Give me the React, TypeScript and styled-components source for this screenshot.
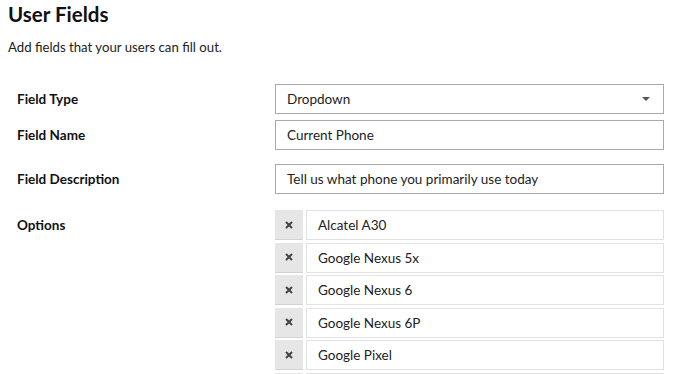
import React from "react";
import styled, { createGlobalStyle } from "styled-components";

const Global = createGlobalStyle`
  html, body { margin: 0; padding: 0; background: #fff; }
  body { font-family: Lato, "Open Sans", sans-serif; color: #222; }
  * { box-sizing: border-box; }
`;

const Page = styled.div`
  width: 690px;
  height: 374px;
  overflow: hidden;
  padding: 1px 8px 0 8px;
`;

const Title = styled.h1`
  margin: 0;
  font-size: 20.5px;
  font-weight: 700;
  line-height: 26px;
  color: #111;
`;

const Subtitle = styled.p`
  margin: 11px 0 0 0;
  font-size: 13.2px;
  line-height: 18px;
  color: #222;
`;

const Form = styled.div`
  display: grid;
  grid-template-columns: 258px 389px;
  padding-left: 9px;
  margin-top: 28px;
`;

const Label = styled.div<{ $mt: number }>`
  margin-top: ${(p) => p.$mt}px;
  height: 29px;
  display: flex;
  align-items: center;
  font-size: 13.5px;
  font-weight: 700;
  color: #111;
`;

const Control = styled.div<{ $mt: number }>`
  margin-top: ${(p) => p.$mt}px;
`;

const Box = styled.div`
  height: 29.5px;
  border: 1px solid #a9a9a9;
  display: flex;
  align-items: center;
  padding: 0 11px;
  font-size: 13.5px;
  color: #222;
  background: #fff;
`;

const SelectBox = styled(Box)`
  justify-content: space-between;
`;

const Caret = styled.span`
  width: 0;
  height: 0;
  border-left: 4px solid transparent;
  border-right: 4px solid transparent;
  border-top: 4px solid #555;
  margin-right: 2px;
`;

const OptionList = styled.div`
  display: flex;
  flex-direction: column;
  gap: 2.6px;
`;

const OptionRow = styled.div`
  display: flex;
  gap: 3px;
  height: 30px;
`;

const RemoveBtn = styled.div`
  width: 28px;
  flex: none;
  background: #e6e6e6;
  border-bottom: 1px solid #d2d2d2;
  display: flex;
  align-items: center;
  justify-content: center;
`;

const OptionInput = styled.div`
  flex: 1;
  border: 1px solid #e2e2e2;
  display: flex;
  align-items: center;
  padding: 0 11px;
  font-size: 13.5px;
  color: #222;
`;

const XIcon = () => (
  <svg width="8" height="8" viewBox="0 0 8 8">
    <path d="M1 1 L7 7 M7 1 L1 7" stroke="#444" strokeWidth="2" strokeLinecap="butt" />
  </svg>
);

const options = [
  "Alcatel A30",
  "Google Nexus 5x",
  "Google Nexus 6",
  "Google Nexus 6P",
  "Google Pixel",
  "",
];

export default function App() {
  return (
    <Page>
      <Global />
      <Title>User Fields</Title>
      <Subtitle>Add fields that your users can fill out.</Subtitle>
      <Form>
        <Label $mt={0}>Field Type</Label>
        <Control $mt={0}>
          <SelectBox>
            Dropdown
            <Caret />
          </SelectBox>
        </Control>
        <Label $mt={6.5}>Field Name</Label>
        <Control $mt={6.5}>
          <Box>Current Phone</Box>
        </Control>
        <Label $mt={14.5}>Field Description</Label>
        <Control $mt={14.5}>
          <Box>Tell us what phone you primarily use today</Box>
        </Control>
        <Label $mt={16.5}>Options</Label>
        <Control $mt={16.5}>
          <OptionList>
            {options.map((o, i) => (
              <OptionRow key={i}>
                <RemoveBtn>
                  <XIcon />
                </RemoveBtn>
                <OptionInput>{o}</OptionInput>
              </OptionRow>
            ))}
          </OptionList>
        </Control>
      </Form>
    </Page>
  );
}
